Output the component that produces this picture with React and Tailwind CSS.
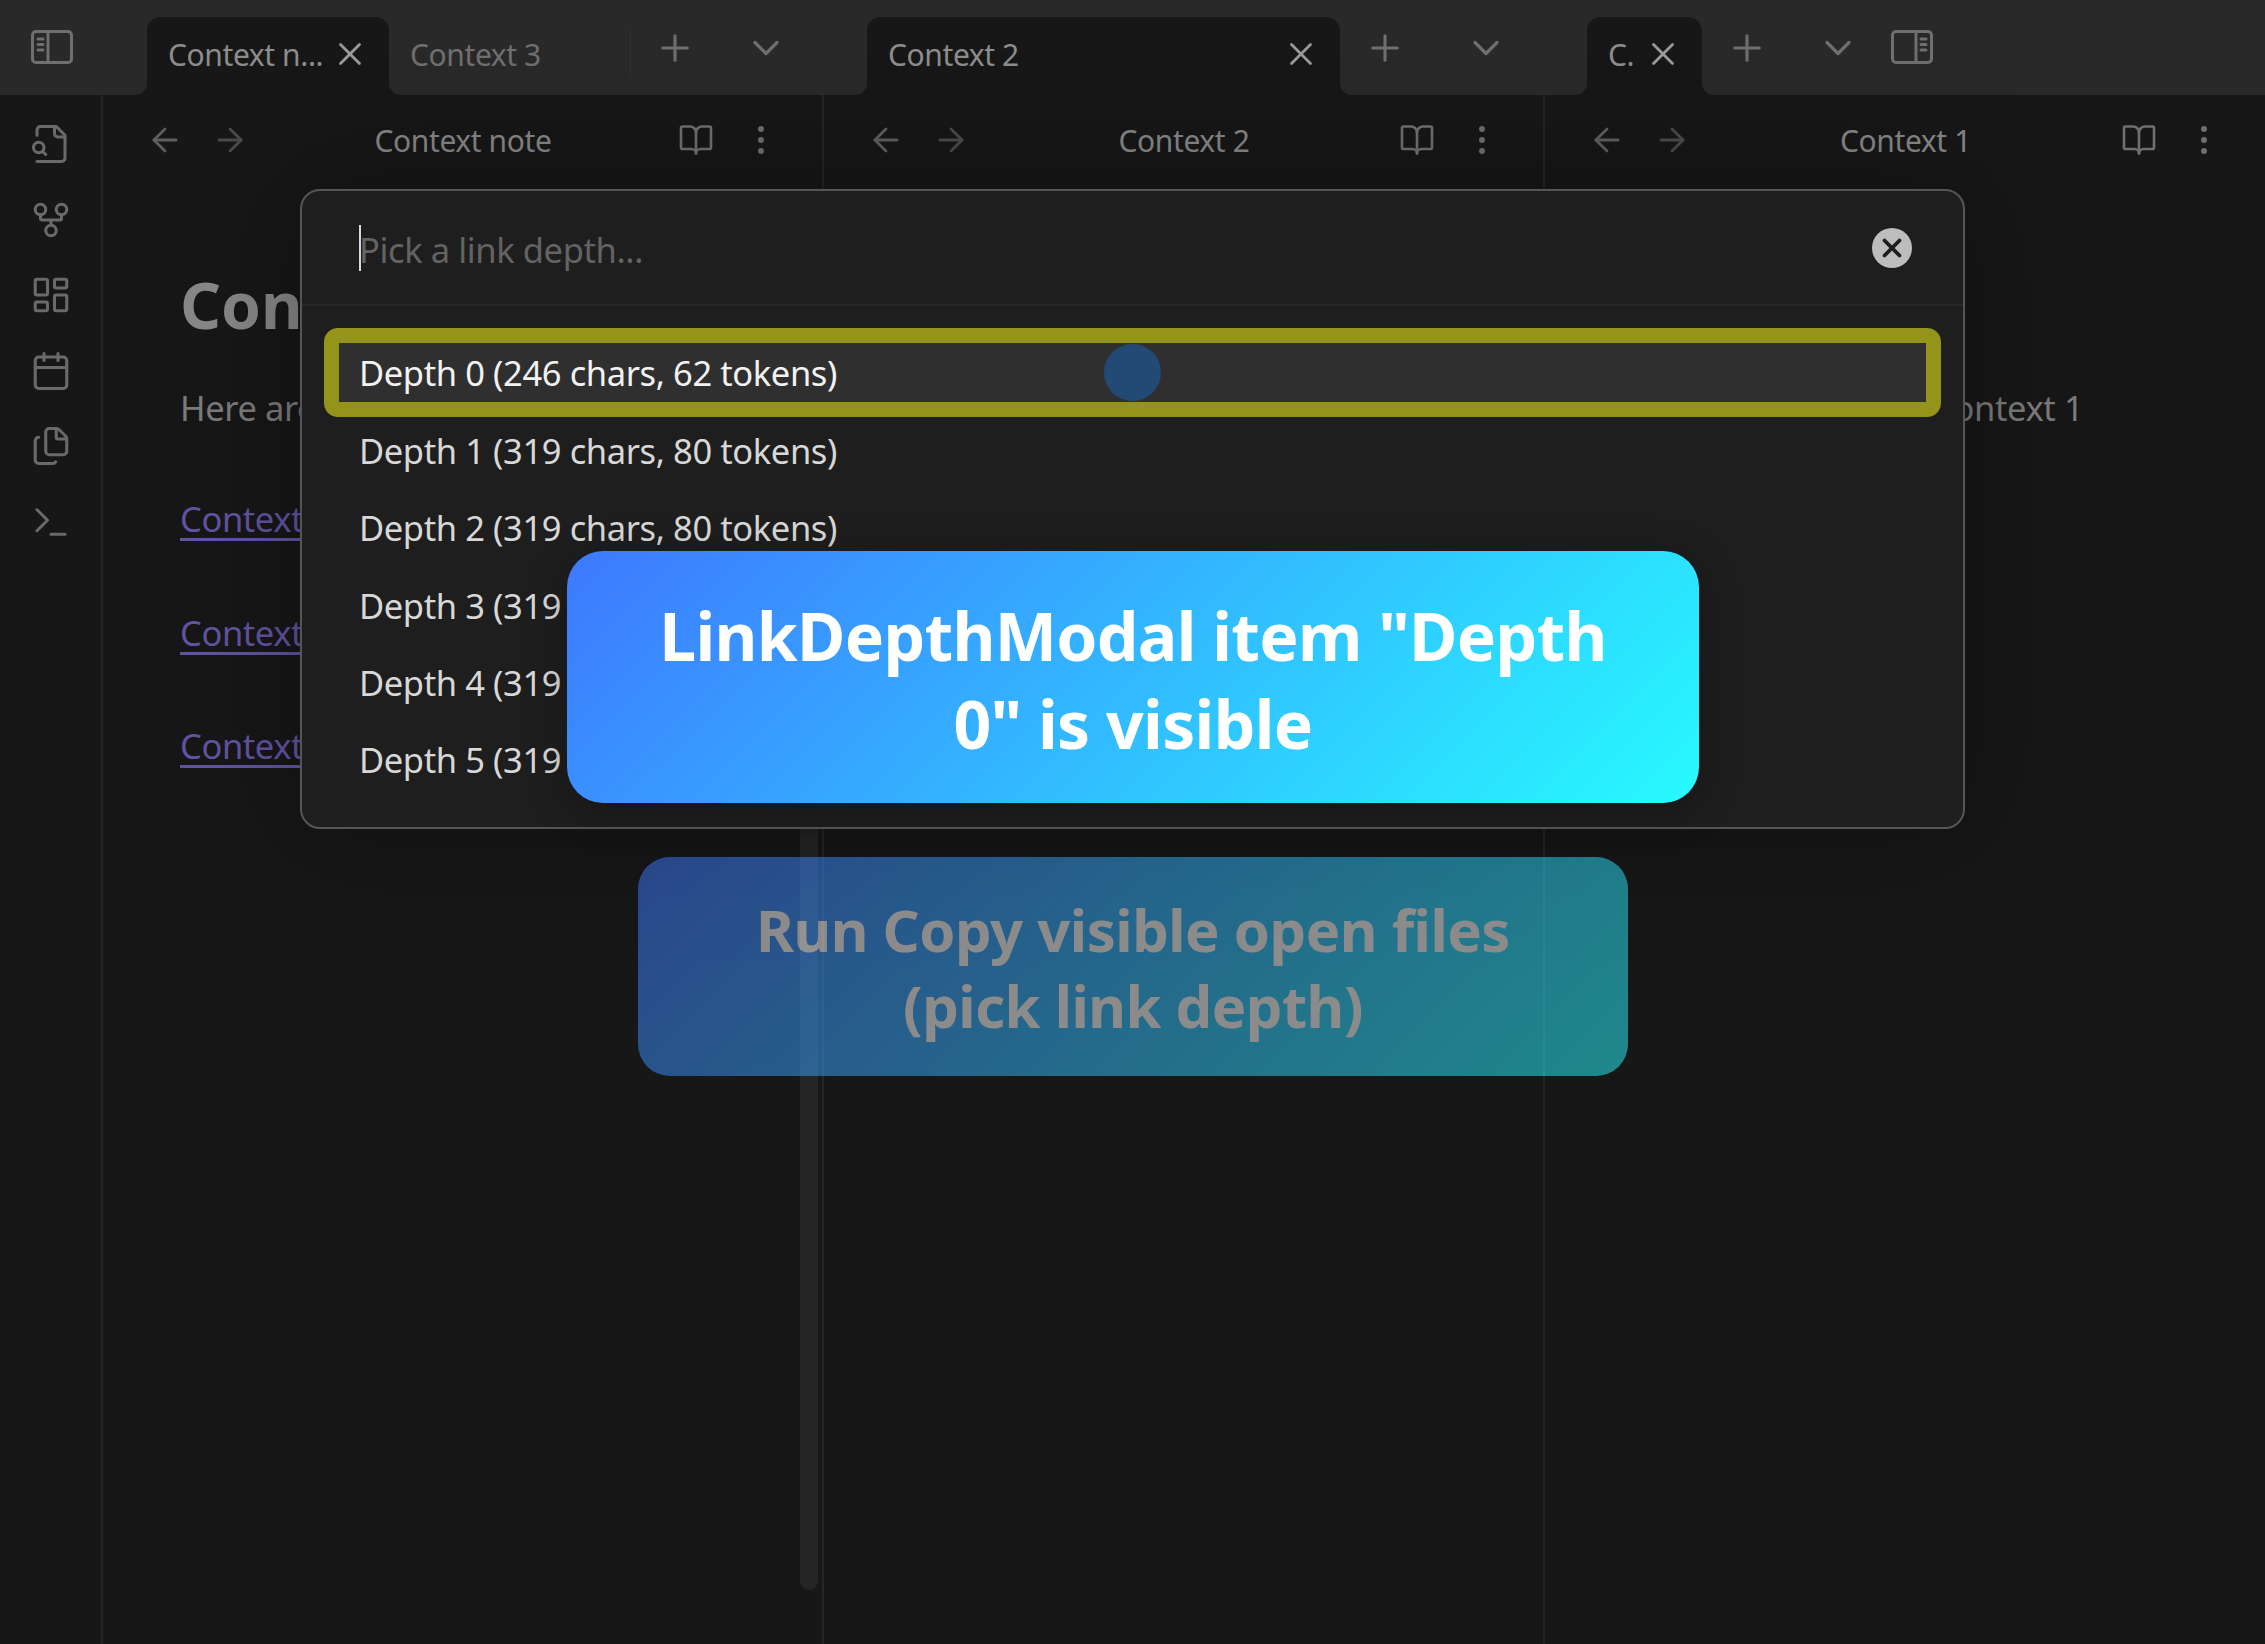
import { ArrowLeft, ArrowRight, BookOpen, Calendar, ChevronDown, EllipsisVertical, Files, GitFork, LayoutDashboard, Plus, Terminal, X } from "lucide-react";

const FileSearchIcon = () => (
  <svg width="42" height="42" viewBox="0 0 24 24" fill="none" stroke="currentColor" strokeWidth="1.75" strokeLinecap="round" strokeLinejoin="round">
    <path d="M4 22h14a2 2 0 0 0 2-2V7l-5-5H6a2 2 0 0 0-2 2v3" />
    <path d="M14 2v4a2 2 0 0 0 2 2h4" />
    <circle cx="5" cy="14" r="3" />
    <path d="m9 18-1.8-1.8" />
  </svg>
);

const SidebarIcon = ({ flip }) => (
  <svg width="42" height="34" viewBox="0 0 42 34" fill="none" stroke="currentColor" strokeWidth="3" strokeLinecap="round" strokeLinejoin="round" className={flip ? "-scale-x-100" : ""}>
    <rect x="1.5" y="1.5" width="39" height="31" rx="3.5" />
    <path d="M17 2v30" />
    <path d="M7 9h5M7 14.5h5M7 20h5" />
  </svg>
);

const Flare = ({ side }) => (
  <span
    className={
      side === "left"
        ? "absolute bottom-0 -left-3 h-3 w-3 bg-[radial-gradient(circle_at_0_0,#292929_11.5px,#171717_12.5px)]"
        : "absolute bottom-0 -right-3 h-3 w-3 bg-[radial-gradient(circle_at_100%_0,#292929_11.5px,#171717_12.5px)]"
    }
  />
);

const Tab = ({ label, width }) => (
  <div className={`relative flex h-[78px] items-center justify-between rounded-t-[14px] bg-[#171717] pl-[21px] pr-[20px] pb-[4px] text-[#8c8c8c] ${width}`}>
    <Flare side="left" />
    <span className="whitespace-nowrap">{label}</span>
    <X size={38} strokeWidth={1.75} className="shrink-0 text-[#9a9a9a]" />
    <Flare side="right" />
  </div>
);

const TabActions = ({ width, gap }) => (
  <div className={`flex h-[78px] items-center pb-[16px] text-[#6f6f6f] ${width} ${gap}`}>
    <Plus size={42} strokeWidth={1.75} />
    <ChevronDown size={44} strokeWidth={1.75} />
  </div>
);

const PaneHeader = ({ title }) => (
  <div className="flex h-[90px] items-center justify-between pl-[43px] pr-[42px]">
    <div className="flex w-[125px] items-center gap-[27px] text-[#4b4b4b]">
      <ArrowLeft size={38} strokeWidth={1.75} className="text-[#5f5f5f]" />
      <ArrowRight size={38} strokeWidth={1.75} />
    </div>
    <span className="whitespace-nowrap text-[#878787]">{title}</span>
    <div className="flex w-[125px] items-center justify-end gap-[28px] text-[#707070]">
      <BookOpen size={36} strokeWidth={1.75} />
      <EllipsisVertical size={38} strokeWidth={1.75} />
    </div>
  </div>
);

const depthItems = [
  "Depth 1 (319 chars, 80 tokens)",
  "Depth 2 (319 chars, 80 tokens)",
  "Depth 3 (319 chars, 80 tokens)",
  "Depth 4 (319 chars, 80 tokens)",
  "Depth 5 (319 chars, 80 tokens)",
];

export default function App() {
  return (
    <div className="relative flex h-[1644px] w-[2265px] flex-col overflow-hidden bg-[#171717] font-['Noto_Sans',sans-serif] text-[30px] tracking-[-0.4px]">
      {/* tab bar */}
      <div className="flex h-[95px] items-end bg-[#292929]">
        <div className="flex w-[867px] items-end">
          <div className="flex h-[78px] w-[147px] items-start pl-[31px] pt-[13px] text-[#6f6f6f]">
            <SidebarIcon />
          </div>
          <Tab label="Context n..." width="w-[242px]" />
          <div className="flex h-[78px] w-[241px] items-center pl-[21px] pb-[4px] text-[#6f6f6f]">Context 3</div>
          <div className="mb-[18px] h-[46px] w-px self-end bg-[#333333]" />
          <TabActions width="w-[236px] pl-[23px]" gap="gap-[48px]" />
        </div>
        <div className="flex w-[720px] items-end">
          <Tab label="Context 2" width="w-[473px]" />
          <TabActions width="w-[247px] pl-[24px]" gap="gap-[58px]" />
        </div>
        <div className="flex items-end">
          <Tab label="C." width="w-[115px]" />
          <TabActions width="w-[189px] pl-[24px]" gap="gap-[48px]" />
          <div className="flex h-[78px] items-start pt-[13px] text-[#6f6f6f]">
            <SidebarIcon flip />
          </div>
        </div>
      </div>

      {/* workspace */}
      <div className="flex min-h-0 flex-1">
        <div className="flex w-[103px] flex-col items-center gap-[33.5px] border-r-2 border-[#252525] pt-[28px] text-[#6a6a6a]">
          <FileSearchIcon />
          <GitFork size={42} strokeWidth={1.75} />
          <LayoutDashboard size={42} strokeWidth={1.75} />
          <Calendar size={42} strokeWidth={1.75} />
          <Files size={42} strokeWidth={1.75} />
          <Terminal size={42} strokeWidth={1.75} />
        </div>

        <div className="w-[721px] border-r-2 border-[#252525]">
          <PaneHeader title="Context note" />
          <div className="px-[77px] pt-[80px] text-[34.5px]">
            <h1 className="text-[64px] leading-[80px] font-bold tracking-normal text-[#888888]">Context note</h1>
            <p className="mt-[36.5px] text-[#7c7c7c]">Here are some links</p>
            <p className="mt-[60px] text-[#6354a3] underline underline-offset-[6px]">Context 1</p>
            <p className="mt-[61.75px] text-[#6354a3] underline underline-offset-[6px]">Context 2</p>
            <p className="mt-[61.75px] text-[#6354a3] underline underline-offset-[6px]">Context 3</p>
          </div>
        </div>

        <div className="w-[721px] border-r-2 border-[#252525]">
          <PaneHeader title="Context 2" />
        </div>

        <div className="flex-1">
          <PaneHeader title="Context 1" />
          <div className="pl-[41px] pt-[196.5px] text-[34.5px]">
            <p className="whitespace-nowrap text-[#7c7c7c]">This one links back to Context 1</p>
          </div>
        </div>
      </div>

      {/* pane scrollbar, runs out from under the modal */}
      <div className="absolute left-[800px] top-[700px] h-[890px] w-[18px] rounded-full bg-[#252525]" />

      {/* link depth modal */}
      <div className="absolute left-[300px] top-[189px] h-[640px] w-[1665px] rounded-[20px] border-2 border-[#555555] bg-[#1e1e1e] text-[34.5px] shadow-[0_0_120px_rgba(0,0,0,0.35)]">
        <div className="flex h-[115px] items-center justify-between border-b-2 border-[#272727] pl-[57px] pr-[51px]">
          <div className="flex items-center text-[#636363]">
            <span className="h-[46px] w-[2px] bg-[#d8d8d8]" />
            <span className="-ml-[2px] pt-[4px]">Pick a link depth...</span>
          </div>
          <div className="flex h-[40px] w-[40px] items-center justify-center rounded-full bg-[#bdbdbd] text-[#1e1e1e]">
            <X size={30} strokeWidth={3} />
          </div>
        </div>
        <div className="px-[22px] pt-[22px]">
          <div className="flex h-[89px] items-center rounded-[14px] border-[15px] border-[#94941a] bg-[#2f2f2f] pl-[20px] text-[#f2f2f2]">
            Depth 0 (246 chars, 62 tokens)
          </div>
          <div className="-mt-[5px]">
            {depthItems.map((item) => (
              <div key={item} className="flex h-[77.4px] items-center pl-[35px] text-[#d8d8d8]">
                {item}
              </div>
            ))}
          </div>
        </div>
      </div>

      {/* cursor dot */}
      <div className="absolute left-[1104px] top-[344px] h-[57px] w-[57px] rounded-full bg-[#224a75]" />

      {/* annotation toasts */}
      <div className="absolute left-[567px] top-[551px] flex h-[252px] w-[1132px] items-center justify-center rounded-[36px] bg-[linear-gradient(135deg,#3e78ff,#27faff)] px-[64px] pt-[3px] text-center text-[66px] leading-[88px] font-bold tracking-[-0.67px] text-white shadow-[0_8px_40px_rgba(0,0,0,0.3)]">
        LinkDepthModal item "Depth 0" is visible
      </div>
      <div className="absolute left-[638px] top-[857px] flex h-[219px] w-[990px] items-center justify-center rounded-[32px] bg-[linear-gradient(135deg,#3e78ff,#27faff)] px-[64px] pt-[3px] text-center text-[58px] leading-[76px] font-bold tracking-[-0.5px] text-white opacity-50">
        Run Copy visible open files (pick link depth)
      </div>
    </div>
  );
}
